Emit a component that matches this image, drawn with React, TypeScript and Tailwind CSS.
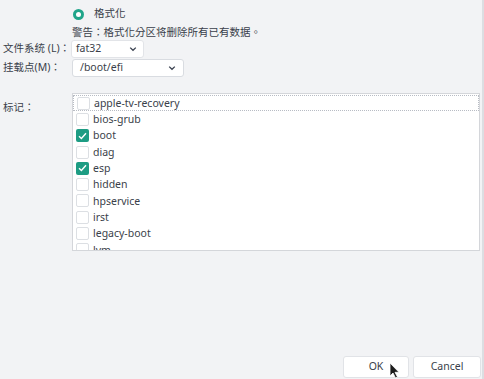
import { useState } from "react";

const flags = [
  { name: "apple-tv-recovery", on: false },
  { name: "bios-grub", on: false },
  { name: "boot", on: true },
  { name: "diag", on: false },
  { name: "esp", on: true },
  { name: "hidden", on: false },
  { name: "hpservice", on: false },
  { name: "irst", on: false },
  { name: "legacy-boot", on: false },
  { name: "lvm", on: false },
];

const Chevron = () => (
  <svg width="8" height="6" viewBox="0 0 8 6" fill="none">
    <path d="M1.2 1.6 4 4.3 6.8 1.6" stroke="#3a4150" strokeWidth="1.3" />
  </svg>
);

const Check = () => (
  <svg width="9" height="8" viewBox="0 0 9 8" fill="none">
    <path d="M1 4.2 3.4 6.5 8 1.2" stroke="#fff" strokeWidth="1.4" />
  </svg>
);

const App = () => {
  const [items, setItems] = useState(flags);

  const toggle = (i: number) =>
    setItems(items.map((it, j) => (j === i ? { ...it, on: !it.on } : it)));

  return (
    <div
      className="relative w-[484px] h-[379px] overflow-hidden bg-[#f2f3f5] text-[10.5px] text-[#3a3f4a] border-r-2 border-[#dcdee2] flex flex-col"
      style={{ fontFamily: '"Noto Sans", "Noto Sans CJK TC", sans-serif' }}
    >
      <div className="flex flex-col pl-[72px] pt-[6px]">
        <label className="flex items-center gap-[10px] h-[16px]">
          <span className="w-[11px] h-[11px] rounded-full bg-[#20a58a] flex items-center justify-center ml-[1px]">
            <span className="w-[5px] h-[5px] rounded-full bg-white" />
          </span>
          <span>格式化</span>
        </label>
        <div className="mt-[2px] leading-[16px]">警告：格式化分区将删除所有已有数据。</div>
      </div>

      <div className="flex items-center h-[18px]">
        <span className="w-[71px] pl-[3px] whitespace-nowrap">文件系统 (L)：</span>
        <button className="w-[73px] h-[18px] bg-white rounded-[3px] border border-[#e2e4e8] flex items-center justify-between pl-[4px] pr-[6px]">
          <span>fat32</span>
          <Chevron />
        </button>
      </div>

      <div className="flex items-center mt-[1px] h-[18px]">
        <span className="w-[72px] pl-[3px] whitespace-nowrap">挂载点(M)：</span>
        <button className="w-[112px] h-[18px] bg-white rounded-[3px] border border-[#d9dce1] flex items-center justify-between pl-[7px] pr-[7px]">
          <span>/boot/efi</span>
          <Chevron />
        </button>
      </div>

      <div className="flex mt-[16px]">
        <span className="w-[72px] pl-[3px] pt-[7px] whitespace-nowrap">标记：</span>
        <div className="w-[408px] h-[158px] bg-white border border-[#d4d6da] overflow-hidden pt-[1px]">
          {items.map((it, i) => (
            <div
              key={it.name}
              onClick={() => toggle(i)}
              className={
                "flex items-center h-[16.3px] pl-[3px] gap-[4px] cursor-default " +
                (i === 0 ? "border border-dotted border-[#b8bcc4] pl-[2px]" : "")
              }
            >
              <span
                className={
                  "w-[13px] h-[13px] rounded-[2px] flex items-center justify-center " +
                  (it.on ? "bg-[#1d9c83]" : "bg-white border border-[#dcdfe3]")
                }
              >
                {it.on && <Check />}
              </span>
              <span className="leading-none">{it.name}</span>
            </div>
          ))}
        </div>
      </div>

      <div className="mt-auto flex justify-end gap-[4px] pr-[1px] pb-[1px]">
        <button className="relative w-[66px] h-[22px] bg-white border border-[#e1e3e7] rounded-[3px]">
          OK
          <svg className="absolute left-[45px] top-[5px]" width="11" height="17" viewBox="0 0 11 17">
            <path d="M1 1v13l3-3 2.5 5 2-1-2.5-4.7H10z" fill="#1c1c1c" stroke="#fff" strokeWidth="0.8" />
          </svg>
        </button>
        <button className="w-[68px] h-[22px] bg-white border border-[#e1e3e7] rounded-[3px]">
          Cancel
        </button>
      </div>
    </div>
  );
};

export default App;
